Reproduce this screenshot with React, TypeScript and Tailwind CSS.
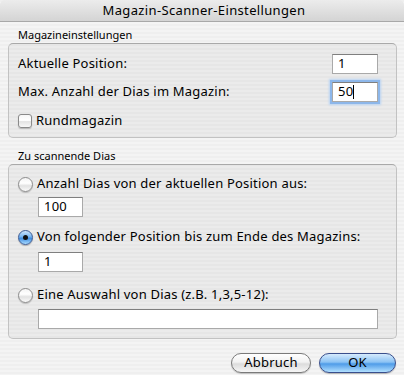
const font = { fontFamily: '"Noto Sans", "DejaVu Sans", sans-serif' };

function Field({ value, focused, className }: { value: string; focused?: boolean; className: string }) {
  return (
    <div
      className={
        "h-[20px] bg-white border border-[#a9a9a9] border-t-[#7f7f7f] px-[5px] flex items-center text-[13px] text-black " +
        (focused ? "shadow-[0_0_0_2px_#8db7ea,0_0_2px_3px_#b9d4f3] border-[#5d88c5] " : "") +
        className
      }
    >
      {value}
      {focused && <span className="w-px h-[14px] bg-black" />}
    </div>
  );
}

function Radio({ checked }: { checked?: boolean }) {
  if (checked) {
    return (
      <div className="w-[15px] h-[15px] shrink-0 rounded-full border border-[#3b5a94] bg-[linear-gradient(to_bottom,#cfe6fc_0%,#73b2ef_45%,#3d8be0_55%,#a9dbff_100%)] flex items-center justify-center shadow-[0_1px_1px_rgba(0,0,0,0.25)]">
        <div className="w-[5px] h-[5px] rounded-full bg-[#111]" />
      </div>
    );
  }
  return (
    <div className="w-[15px] h-[15px] shrink-0 rounded-full border border-[#8c8c8c] bg-[linear-gradient(to_bottom,#f4f4f4_0%,#ffffff_40%,#e2e2e2_60%,#fafafa_100%)] shadow-[0_1px_1px_rgba(0,0,0,0.2)]" />
  );
}

export default function App() {
  return (
    <div
      style={font}
      className="w-[404px] h-[375px] overflow-hidden bg-[repeating-linear-gradient(to_bottom,#efefef_0px,#efefef_2px,#f4f4f4_2px,#f4f4f4_4px)] text-black flex flex-col"
    >
      <div className="h-[22px] shrink-0 rounded-t-[5px] border-b border-[#a8a8a8] bg-[linear-gradient(to_bottom,#ececec,#d4d4d4)] flex items-center justify-center text-[13px] tracking-[0.35px] pl-[4px]">
        Magazin-Scanner-Einstellungen
      </div>

      <div className="px-[8px] pr-[7px] flex flex-col tracking-[0.2px]">
        <div className="mt-[6px] pl-[10px] h-[14px] leading-[14px] text-[11px] tracking-normal">Magazineinstellungen</div>
        <div className="mt-px h-[95px] rounded-[5px] border border-[#c2c2c2] border-t-[#a9a9a9] bg-[rgba(0,0,0,0.035)] pl-[9px] pr-[18px] pt-[10px] flex flex-col">
          <div className="h-[20px] flex items-center justify-between text-[13px]">
            <span>Aktuelle Position:</span>
            <Field value="1" className="w-[46px]" />
          </div>
          <div className="mt-[8px] h-[20px] flex items-center justify-between text-[13px]">
            <span>Max. Anzahl der Dias im Magazin:</span>
            <Field value="50" focused className="w-[46px]" />
          </div>
          <div className="mt-[12px] h-[14px] flex items-center gap-[4px] text-[13px]">
            <div className="w-[14px] h-[14px] rounded-[3px] border border-[#8a8a8a] bg-[linear-gradient(to_bottom,#f7f7f7,#ffffff_45%,#e3e3e3_55%,#f8f8f8)] shadow-[0_1px_1px_rgba(0,0,0,0.2)]" />
            <span>Rundmagazin</span>
          </div>
        </div>

        <div className="mt-[11px] pl-[10px] h-[14px] leading-[14px] text-[11px] tracking-normal">Zu scannende Dias</div>
        <div className="mt-px h-[175px] rounded-[5px] border border-[#c2c2c2] border-t-[#a9a9a9] bg-[rgba(0,0,0,0.035)] pl-[9px] pr-[18px] pt-[11px] flex flex-col text-[13px]">
          <div className="h-[16px] flex items-center gap-[4px]">
            <Radio />
            <span>Anzahl Dias von der aktuellen Position aus:</span>
          </div>
          <Field value="100" className="mt-[5px] ml-[20px] w-[45px]" />
          <div className="mt-[12px] h-[16px] flex items-center gap-[4px]">
            <Radio checked />
            <span>Von folgender Position bis zum Ende des Magazins:</span>
          </div>
          <Field value="1" className="mt-[7px] ml-[20px] w-[45px]" />
          <div className="mt-[15px] h-[16px] flex items-center gap-[4px]">
            <Radio />
            <span>Eine Auswahl von Dias (z.B. 1,3,5-12):</span>
          </div>
          <Field value="" className="mt-[6px] ml-[20px]" />
        </div>

        <div className="mt-[14px] flex justify-end gap-[8px] pr-[1px] text-[13px]">
          <div className="w-[80px] h-[20px] rounded-full border border-[#7a7a7a] bg-[linear-gradient(to_bottom,#ffffff_0%,#f2f2f2_45%,#dcdcdc_55%,#f6f6f6_100%)] shadow-[0_1px_1px_rgba(0,0,0,0.2)] flex items-center justify-center">
            Abbruch
          </div>
          <div className="w-[77px] h-[20px] rounded-full border border-[#3a4f8c] bg-[linear-gradient(to_bottom,#d6ebfd_0%,#8cc3f4_45%,#4f9ce8_55%,#b2e0ff_100%)] shadow-[0_1px_1px_rgba(0,0,0,0.25)] flex items-center justify-center">
            OK
          </div>
        </div>
      </div>
    </div>
  );
}
